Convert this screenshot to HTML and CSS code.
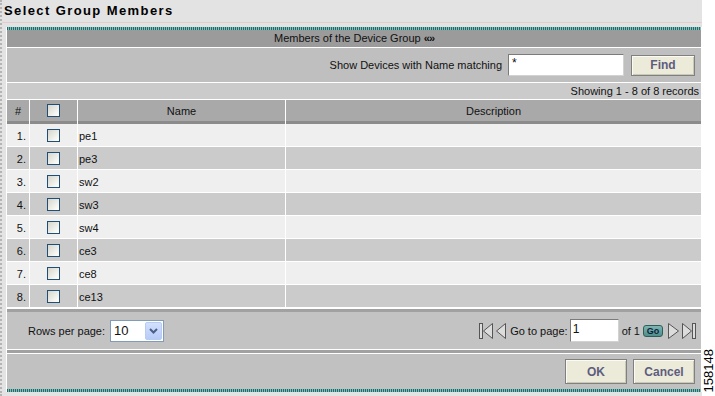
FILE: index.html
```html
<!DOCTYPE html>
<html>
<head>
<meta charset="utf-8">
<title>Select Group Members</title>
<link rel="stylesheet" href="styles.css">
</head>
<body>
<div class="screen">
  <div class="frame">
    <div class="title">Select Group Members</div>
    <div class="panel">
      <div class="teal"></div>
      <div class="caption">Members of the Device Group <span class="toggle">«»</span></div>
      <div class="search">
        <span class="search-label">Show Devices with Name matching</span>
        <div class="textbox">*</div>
        <button class="btn find">Find</button>
      </div>
      <div class="count">Showing 1 - 8 of 8 records</div>
      <div class="grid">
        <div class="head">#</div>
        <div class="head"><span class="cb"></span></div>
        <div class="head">Name</div>
        <div class="head">Description</div>

        <div class="row light"><div class="cell num">1.</div><div class="cell chk"><span class="cb"></span></div><div class="cell name">pe1</div><div class="cell"></div></div>
        <div class="row dark"><div class="cell num">2.</div><div class="cell chk"><span class="cb"></span></div><div class="cell name">pe3</div><div class="cell"></div></div>
        <div class="row light"><div class="cell num">3.</div><div class="cell chk"><span class="cb"></span></div><div class="cell name">sw2</div><div class="cell"></div></div>
        <div class="row dark"><div class="cell num">4.</div><div class="cell chk"><span class="cb"></span></div><div class="cell name">sw3</div><div class="cell"></div></div>
        <div class="row light"><div class="cell num">5.</div><div class="cell chk"><span class="cb"></span></div><div class="cell name">sw4</div><div class="cell"></div></div>
        <div class="row dark"><div class="cell num">6.</div><div class="cell chk"><span class="cb"></span></div><div class="cell name">ce3</div><div class="cell"></div></div>
        <div class="row light"><div class="cell num">7.</div><div class="cell chk"><span class="cb"></span></div><div class="cell name">ce8</div><div class="cell"></div></div>
        <div class="row dark"><div class="cell num">8.</div><div class="cell chk"><span class="cb"></span></div><div class="cell name">ce13</div><div class="cell"></div></div>
      </div>
      <div class="pager">
        <div class="rows-per">
          <span>Rows per page:</span>
          <div class="select"><span class="select-val">10</span><span class="select-arrow"><svg width="9" height="6" viewBox="0 0 9 6"><path d="M1 1 L4.5 4.5 L8 1" fill="none" stroke="#4b5f86" stroke-width="2"/></svg></span></div>
        </div>
        <div class="nav">
          <svg class="ico" width="14" height="18" viewBox="0 0 14 18"><rect x="0.5" y="1.5" width="3" height="15" fill="#dcdcdc" stroke="#555"/><polygon points="13.5,1.5 4.5,9 13.5,16.5" fill="#dcdcdc" stroke="#555"/></svg>
          <svg class="ico prev" width="10" height="18" viewBox="0 0 10 18"><polygon points="9.5,1.5 0.5,9 9.5,16.5" fill="#dcdcdc" stroke="#555"/></svg>
          <span class="goto">Go to page:</span>
          <div class="pagebox">1</div>
          <span class="of">of 1</span>
          <button class="go">Go</button>
          <svg class="ico next" width="11" height="18" viewBox="0 0 11 18"><polygon points="0.5,1.5 10.5,9 0.5,16.5" fill="#dcdcdc" stroke="#555"/></svg>
          <svg class="ico last" width="14" height="18" viewBox="0 0 14 18"><polygon points="0.5,1.5 9.5,9 0.5,16.5" fill="#dcdcdc" stroke="#555"/><rect x="10.5" y="1.5" width="3" height="15" fill="#dcdcdc" stroke="#555"/></svg>
        </div>
      </div>
      <div class="divider"></div>
      <div class="actions">
        <button class="btn action">OK</button>
        <button class="btn action">Cancel</button>
      </div>
      <div class="teal"></div>
    </div>
  </div>
  <div class="stamp"><span>158148</span></div>
</div>
</body>
</html>
```
FILE: styles.css
```css
html, body {
  margin: 0;
  padding: 0;
  background: #fff;
}
body {
  font-family: "Liberation Sans", Arial, sans-serif;
  font-size: 11px;
  color: #111;
}
.screen {
  display: flex;
  width: 715px;
  height: 396px;
  overflow: hidden;
}
.frame {
  width: 700px;
  border-left: 2px dotted #b4b4b4;
  background: #e3e3e3;
  display: flex;
  flex-direction: column;
}
.title {
  height: 22px;
  line-height: 22px;
  padding-left: 2px;
  font-weight: bold;
  font-size: 13px;
  letter-spacing: 1.4px;
  color: #000;
  border-bottom: 1px solid #e6cdcd;
}
.panel {
  margin: 4px 0 0 4px;
  border-left: 1px solid #fff;
  border-right: 1px solid #fff;
  display: flex;
  flex-direction: column;
}
.teal {
  height: 3px;
  background: repeating-linear-gradient(90deg, #1d6d6a 0 1px, #86bcb8 1px 2px);
}
.caption {
  height: 17px;
  line-height: 17px;
  text-align: center;
  background: #9b9b9b;
  border-bottom: 1px solid #fff;
}
.toggle {
  font-weight: bold;
  font-size: 11px;
  letter-spacing: -1px;
}
.search {
  height: 34px;
  display: flex;
  align-items: center;
  justify-content: flex-end;
  padding-right: 6px;
  background: #bfbfbf;
  border-bottom: 1px solid #fff;
}
.search-label {
  margin-right: 6px;
}
.textbox {
  box-sizing: border-box;
  width: 116px;
  height: 22px;
  border: 1px solid;
  border-color: #7b7b7b #d2d2d2 #d2d2d2 #7b7b7b;
  background: #fff;
  font-size: 12px;
  padding: 1px 3px;
}
.btn {
  box-sizing: border-box;
  border: 1px solid #808080;
  background: #ecead8;
  color: #5d5d80;
  font-family: "Liberation Sans", Arial, sans-serif;
  font-weight: bold;
  font-size: 12px;
  padding: 0;
  box-shadow: inset 1px 1px 0 #fbfbf3, inset -1px -1px 0 #cac8b6;
}
.find {
  margin-left: 7px;
  width: 64px;
  height: 21px;
}
.count {
  height: 16px;
  line-height: 16px;
  text-align: right;
  padding-right: 2px;
  background: #cbcbcb;
  border-bottom: 1px solid #fff;
}
.grid {
  display: grid;
  grid-template-columns: 22px 47px 207px 1fr;
  column-gap: 1px;
  background: #fff;
  padding-bottom: 1px;
}
.head {
  height: 21px;
  background: #a9a9a9;
  border-bottom: 3px solid #8b8b8b;
  display: flex;
  align-items: center;
  justify-content: center;
}
.row {
  display: contents;
}
.cell {
  box-sizing: border-box;
  height: 23px;
  border-bottom: 1px solid #fff;
  display: flex;
  align-items: center;
  padding-top: 1px;
}
.light .cell {
  background: #efefef;
}
.dark .cell {
  background: #cbcbcb;
}
.num {
  justify-content: flex-end;
  padding-right: 3px;
}
.chk {
  justify-content: center;
}
.name {
  padding-left: 1px;
}
.cb {
  display: block;
  box-sizing: border-box;
  width: 13px;
  height: 13px;
  border: 1px solid #1f4f75;
  background: linear-gradient(135deg, #d6d6ce 0%, #f4f4f0 70%, #ffffff 100%);
}
.pager {
  height: 37px;
  border-top: 3px solid #a1a1a1;
  border-bottom: 1px solid #fff;
  background: #c3c3c3;
  display: flex;
  align-items: center;
  justify-content: space-between;
  padding: 0 5px 0 21px;
}
.rows-per {
  display: flex;
  align-items: center;
  gap: 5px;
}
.select {
  box-sizing: border-box;
  width: 54px;
  height: 22px;
  border: 1px solid #7f9db9;
  background: #fff;
  display: flex;
  align-items: center;
  justify-content: space-between;
  padding: 1px;
}
.select-val {
  font-size: 13px;
  padding-left: 2px;
}
.select-arrow {
  box-sizing: border-box;
  width: 17px;
  height: 18px;
  border: 1px solid #b9cbf0;
  border-radius: 2px;
  background: linear-gradient(180deg, #d3e0fd 0%, #b6cbf8 100%);
  display: flex;
  align-items: center;
  justify-content: center;
}
.nav {
  display: flex;
  align-items: center;
}
.ico {
  display: block;
}
.prev {
  margin-left: 3px;
}
.goto {
  margin-left: 4px;
}
.pagebox {
  box-sizing: border-box;
  margin-left: 2px;
  width: 49px;
  height: 23px;
  border: 1px solid;
  border-color: #7b7b7b #d2d2d2 #d2d2d2 #7b7b7b;
  background: #fff;
  font-size: 12px;
  padding: 2px 2px;
}
.of {
  margin-left: 3px;
}
.go {
  box-sizing: border-box;
  margin-left: 3px;
  width: 20px;
  height: 12px;
  padding: 0;
  border: 1px solid #2d5e5b;
  border-radius: 3px;
  background: linear-gradient(180deg, #7db5b1 0%, #4e8e8a 100%);
  color: #0e1e3a;
  font-family: "Liberation Sans", Arial, sans-serif;
  font-weight: bold;
  font-size: 9px;
  line-height: 10px;
}
.next {
  margin-left: 5px;
}
.last {
  margin-left: 3px;
}
.divider {
  height: 3px;
  background: #a1a1a1;
  border-bottom: 1px solid #fff;
}
.actions {
  height: 35px;
  background: #c1c1c1;
  display: flex;
  align-items: center;
  justify-content: flex-end;
  gap: 6px;
  padding-right: 6px;
}
.action {
  width: 62px;
  height: 25px;
}
.stamp {
  flex: 1;
  display: flex;
  align-items: flex-end;
  justify-content: center;
  padding-bottom: 4px;
}
.stamp span {
  writing-mode: vertical-rl;
  transform: rotate(180deg);
  font-size: 13px;
  line-height: 13px;
  color: #000;
}
```
